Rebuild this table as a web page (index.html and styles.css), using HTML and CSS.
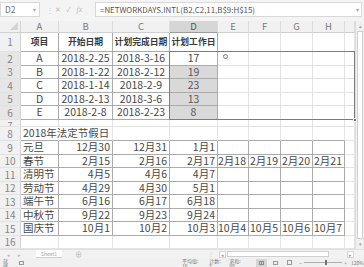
FILE: index.html
```html
<!DOCTYPE html>
<html lang="zh">
<head>
<meta charset="utf-8">
<link rel="stylesheet" href="styles.css">
</head>
<body>
<div class="app">
  <div class="fbar">
    <div class="namebox"><span>D2</span><span class="dd">▾</span></div>
    <span class="sep">⋮</span>
    <div class="btns"><span>✕</span><span>✓</span><span class="fx">fx</span></div>
    <div class="formula"><span>=NETWORKDAYS.INTL(B2,C2,11,B$9:H$15)</span><span class="dd">▾</span></div>
  </div>
  <div class="main">
    <div class="sheet">
      <div class="corner"></div><div class="ch">A</div><div class="ch">B</div><div class="ch">C</div><div class="ch cur">D</div><div class="ch">E</div><div class="ch">F</div><div class="ch">G</div><div class="ch">H</div><div class="ch"></div>

      <div class="rh">1</div><div class="c t m hd">项目</div><div class="c t m hd">开始日期</div><div class="c t m hd">计划完成日期</div><div class="c t m hd">计划工作日</div><div class="c"></div><div class="c"></div><div class="c"></div><div class="c"></div><div class="c"></div>

      <div class="rh on">2</div><div class="c t m">A</div><div class="c t m">2018-2-25</div><div class="c t m">2018-3-16</div><div class="c t m">17</div><div class="c"><span class="cursor"></span></div><div class="c"></div><div class="c"></div><div class="c"></div><div class="c"></div>

      <div class="rh on">3</div><div class="c t m">B</div><div class="c t m">2018-1-22</div><div class="c t m">2018-2-12</div><div class="c t m sl">19</div><div class="c"></div><div class="c"></div><div class="c"></div><div class="c"></div><div class="c"></div>

      <div class="rh on">4</div><div class="c t m">C</div><div class="c t m">2018-1-14</div><div class="c t m">2018-2-9</div><div class="c t m sl">23</div><div class="c"></div><div class="c"></div><div class="c"></div><div class="c"></div><div class="c"></div>

      <div class="rh on">5</div><div class="c t m">D</div><div class="c t m">2018-2-13</div><div class="c t m">2018-3-6</div><div class="c t m sl">13</div><div class="c"></div><div class="c"></div><div class="c"></div><div class="c"></div><div class="c"></div>

      <div class="rh on">6</div><div class="c t m">E</div><div class="c t m">2018-2-8</div><div class="c t m">2018-2-23</div><div class="c t m sl">8</div><div class="c"></div><div class="c"></div><div class="c"></div><div class="c"></div><div class="c"></div>

      <div class="rh r7"><span>7</span></div><div class="c"></div><div class="c"></div><div class="c"></div><div class="c"></div><div class="c"></div><div class="c"></div><div class="c"></div><div class="c"></div><div class="c"></div>

      <div class="rh">8</div><div class="c top ov">2018年法定节假日</div><div class="c top"></div><div class="c top"></div><div class="c top"></div><div class="c top"></div><div class="c top"></div><div class="c top"></div><div class="c top"></div><div class="c"></div>

      <div class="rh">9</div><div class="c t">元旦</div><div class="c t r">12月30</div><div class="c t r">12月31</div><div class="c t r">1月1</div><div class="c t"></div><div class="c t"></div><div class="c t"></div><div class="c t"></div><div class="c"></div>

      <div class="rh">10</div><div class="c t">春节</div><div class="c t r">2月15</div><div class="c t r">2月16</div><div class="c t r">2月17</div><div class="c t r">2月18</div><div class="c t r">2月19</div><div class="c t r">2月20</div><div class="c t r">2月21</div><div class="c"></div>

      <div class="rh">11</div><div class="c t">清明节</div><div class="c t r">4月5</div><div class="c t r">4月6</div><div class="c t r">4月7</div><div class="c t"></div><div class="c t"></div><div class="c t"></div><div class="c t"></div><div class="c"></div>

      <div class="rh">12</div><div class="c t">劳动节</div><div class="c t r">4月29</div><div class="c t r">4月30</div><div class="c t r">5月1</div><div class="c t"></div><div class="c t"></div><div class="c t"></div><div class="c t"></div><div class="c"></div>

      <div class="rh">13</div><div class="c t">端午节</div><div class="c t r">6月16</div><div class="c t r">6月17</div><div class="c t r">6月18</div><div class="c t"></div><div class="c t"></div><div class="c t"></div><div class="c t"></div><div class="c"></div>

      <div class="rh">14</div><div class="c t">中秋节</div><div class="c t r">9月22</div><div class="c t r">9月23</div><div class="c t r">9月24</div><div class="c t"></div><div class="c t"></div><div class="c t"></div><div class="c t"></div><div class="c"></div>

      <div class="rh">15</div><div class="c t">国庆节</div><div class="c t r">10月1</div><div class="c t r">10月2</div><div class="c t r">10月3</div><div class="c t r">10月4</div><div class="c t r">10月5</div><div class="c t r">10月6</div><div class="c t r">10月7</div><div class="c"></div>

      <div class="rh">16</div><div class="c"></div><div class="c"></div><div class="c"></div><div class="c"></div><div class="c"></div><div class="c"></div><div class="c"></div><div class="c"></div><div class="c"></div>

      <div class="sel"><span class="handle"></span></div>
    </div>
    <div class="vscroll">
      <span class="varr">▴</span>
      <div class="vthumb"></div>
      <span class="varr">▾</span>
    </div>
  </div>
  <div class="tabs">
    <span class="nav">◂</span><span class="nav">▸</span>
    <span class="tab">Sheet1</span>
    <span class="add">⊕</span>
    <span class="hsep">⋮</span>
    <div class="hscroll">
      <span class="harr">◂</span>
      <div class="hthumb"></div>
      <span class="harr">▸</span>
    </div>
  </div>
  <div class="status">
    <span class="ready">就绪</span>
    <span class="macro"></span>
    <span class="stat first">平均值: 16</span>
    <span class="stat">计数: 5</span>
    <span class="stat">求和: 80</span>
    <span class="view on"><span class="ico grid"></span></span>
    <span class="view"><span class="ico page"></span></span>
    <span class="view"><span class="ico brk"></span></span>
    <span class="zminus">−</span>
    <span class="slider"><span class="knob"></span></span>
    <span class="zplus">+</span>
    <span class="zoom">120%</span>
  </div>
</div>
</body>
</html>
```

FILE: styles.css
```css
* { box-sizing: border-box; margin: 0; padding: 0; }
html, body { width: 364px; height: 267px; overflow: hidden; background: #fff; }
body { font-family: "Noto Sans CJK SC", "Noto Sans", sans-serif; color: #474747; font-size: 10.5px; }

.app { width: 364px; height: 267px; display: flex; flex-direction: column; }

/* formula bar */
.fbar { height: 21px; background: #f4f4f4; display: flex; align-items: flex-start; padding-top: 2px; }
.namebox { width: 40px; height: 15px; background: #fff; border: 1px solid #d9d9d9; display: flex; align-items: center; justify-content: space-between; padding: 0 3px 0 4px; font-size: 8.5px; line-height: 1; color: #777; }
.dd { font-size: 6px; color: #aaa; line-height: 1; }
.sep { margin-left: 6px; width: 6px; font-size: 8px; color: #d2d2d2; line-height: 15px; }
.btns { display: flex; height: 15px; align-items: center; }
.btns span { width: 11px; text-align: center; font-size: 7px; line-height: 1; color: #bdbdbd; }
.btns .fx { font-style: italic; font-family: "Liberation Serif", serif; font-size: 8px; }
.formula { margin-left: 10px; flex: 1; margin-right: 2px; height: 15px; background: #fff; border: 1px solid #d9d9d9; display: flex; align-items: center; justify-content: space-between; padding: 0 2px 0 4px; color: #555; font-size: 7.9px; line-height: 1; }

/* sheet */
.main { height: 228px; display: flex; }
.sheet { position: relative; display: grid; grid-template-columns: 21px 38px 54px 57px 48px 31px 32px 32px 32px 10px; grid-template-rows: 12px 19px 14px 13px 14px 13px 14px 7px 14px 14px 13px 14px 13px 14px 13px 14px 13px; line-height: 1; }
.sheet > div { display: flex; align-items: center; white-space: nowrap; }

.corner { background: #f1f1f1; border-right: 1px solid #d2d2d2; border-bottom: 1px solid #cfcfcf; position: relative; }
.corner::after { content: ""; position: absolute; right: 2px; bottom: 2px; border-style: solid; border-width: 0 0 8px 8px; border-color: transparent transparent #d3d3d3 transparent; }
.ch { background: #f1f1f1; border-right: 1px solid #dcdcdc; border-bottom: 1px solid #cfcfcf; justify-content: center; color: #7a7a7a; font-size: 9.5px; }
.ch.cur { background: #d6d6d6; color: #555; border-bottom-color: #9c9c9c; }
.rh { background: #f1f1f1; border-right: 1px solid #d2d2d2; border-bottom: 1px solid #e2e2e2; justify-content: center; color: #858585; font-size: 10px; }
.rh.on { background: #e6e6e6; }
.sheet > .rh.r7 { align-items: flex-start; overflow: hidden; }
.r7 span { display: block; height: 6px; overflow: hidden; font-size: 9px; padding-top: 1px; }

.c { border-right: 1px solid #e3e3e3; border-bottom: 1px solid #e3e3e3; padding: 0 2px; }
.c.t { border-right-color: #ababab; border-bottom-color: #ababab; }
.c.top { border-bottom-color: #ababab; }
.c.m { justify-content: center; }
.c.r { justify-content: flex-end; }
.c.hd { font-size: 8.8px; font-weight: bold; color: #3a3a3a; padding: 0; }
.c.sl { background: #d9d9d9; color: #5a5a5a; }
.sheet > .c.ov { border-right-color: transparent; position: relative; z-index: 1; }

.cursor { width: 5px; height: 5px; border: 1px solid #8a8a8a; border-radius: 50%; margin: -4px 0 0 3px; }

.sel { position: absolute; grid-column: 5; grid-row: 3 / 8; top: -1px; left: -1px; right: 0; bottom: 0; border: 1px solid #7c7c7c; }
.handle { position: absolute; right: -3px; bottom: -3px; width: 4px; height: 4px; background: #7c7c7c; border: 1px solid #fff; }

/* vertical scrollbar */
.vscroll { width: 9px; background: #f0f0f0; border-left: 1px solid #dedede; display: flex; flex-direction: column; align-items: center; padding: 1px 0; }
.varr { font-size: 5px; color: #9a9a9a; height: 8px; line-height: 8px; }
.vthumb { flex: 1; width: 6px; background: #fff; border: 1px solid #cfcfcf; margin: 1px 0; }

/* tabs */
.tabs { height: 9px; background: #f2f2f2; border-top: 1px solid #e0e0e0; display: flex; align-items: center; font-size: 5px; line-height: 1; color: #b5b5b5; }
.nav { width: 6px; margin-left: 5px; text-align: center; }
.tab { margin-left: 14px; width: 26px; height: 8px; background: #fff; text-align: center; line-height: 8px; color: #a0a0a0; border-bottom: 1px solid #cfcfcf; }
.add { margin-left: 13px; font-size: 7px; color: #b0b0b0; }
.hsep { margin-left: 126px; font-size: 6px; color: #d0d0d0; }
.hscroll { margin-left: 5px; width: 135px; height: 8px; display: flex; align-items: center; }
.harr { width: 7px; height: 7px; font-size: 5px; line-height: 6px; text-align: center; color: #9a9a9a; background: #fff; border: 1px solid #d7d7d7; }
.hthumb { width: 102px; height: 6px; background: #fff; border: 1px solid #cfcfcf; margin-right: auto; margin-left: 1px; }

/* status */
.status { height: 9px; background: #f0f0f0; display: flex; align-items: center; font-size: 5px; line-height: 1; color: #7a7a7a; }
.ready { margin-left: 3px; }
.macro { margin-left: 7px; width: 5px; height: 4px; border: 1px solid #999; }
.stat { margin-left: 6px; }
.stat.first { margin-left: 158px; }
.view { width: 12px; height: 8px; display: flex; align-items: center; justify-content: center; margin-left: 3px; }
.view.on { background: #d5d5d5; margin-left: 10px; }
.ico { width: 5px; height: 4px; border: 1px solid #8a8a8a; }
.ico.grid { background: linear-gradient(#8a8a8a, #8a8a8a) center / 1px 100% no-repeat; }
.ico.page { border-color: #9a9a9a; }
.ico.brk { height: 5px; border-color: #9a9a9a; }
.zminus { margin-left: 4px; font-size: 5px; }
.slider { position: relative; width: 42px; height: 1px; background: #b0b0b0; margin-left: 2px; }
.knob { position: absolute; left: 21px; top: -2px; width: 2px; height: 5px; background: #707070; }
.zplus { margin-left: 2px; font-size: 5px; }
.zoom { margin-left: 4px; }
```
